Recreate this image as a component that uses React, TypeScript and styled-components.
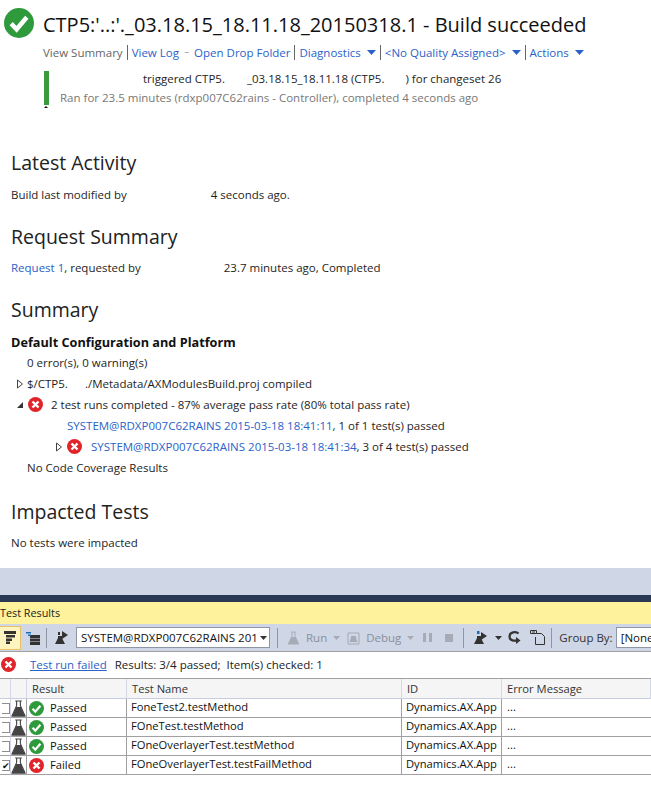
import React from "react";
import styled, { createGlobalStyle } from "styled-components";

const GlobalStyle = createGlobalStyle`
  html, body { margin: 0; padding: 0; background: #fff; }
  body { font-family: "Open Sans", "Noto Sans", sans-serif; color: #1e1e1e; }
`;

const rows = [
  { name: "FoneTest2.testMethod", passed: true, checked: false },
  { name: "FOneTest.testMethod", passed: true, checked: false },
  { name: "FOneOverlayerTest.testMethod", passed: true, checked: false },
  { name: "FOneOverlayerTest.testFailMethod", passed: false, checked: true },
];

const CheckBadge = ({ size }: { size: number }) => (
  <svg width={size} height={size} viewBox="0 0 20 20">
    <circle cx="10" cy="10" r="10" fill="#2f9a3c" />
    <path d="M4.8 10.4l3.6 3.8 6.8-8" fill="none" stroke="#fff" strokeWidth="3" />
  </svg>
);

const ErrorBadge = ({ size }: { size: number }) => (
  <svg width={size} height={size} viewBox="0 0 20 20">
    <circle cx="10" cy="10" r="10" fill="#e0242a" />
    <path d="M6 6l8 8M14 6l-8 8" fill="none" stroke="#fff" strokeWidth="3.2" />
  </svg>
);

const Flask = ({ color = "#444", width = 16, height = 19 }: { color?: string; width?: number; height?: number }) => (
  <svg width={width} height={height} viewBox="0 0 16 19">
    <path d="M4.500 1.500h7M6 1.500v5L1 17.500h14L10 6.500v-5" fill="none" stroke={color} strokeWidth="1.200" />
    <path d="M5.500 8h5L15 18H1z" fill={color} />
  </svg>
);

const Expander = ({ open }: { open?: boolean }) => (
  <svg width="8" height="10" viewBox="0 0 8 10">
    {open ? <path d="M1 8h6V2z" fill="#333" /> : <path d="M1.500 1l5 4-5 4z" fill="#fff" stroke="#444" />}
  </svg>
);

const Caret = ({ color = "#2a62c9", width = 9 }: { color?: string; width?: number }) => (
  <CaretSvg width={width} height={Math.round(width / 2)} viewBox="0 0 9 5">
    <path d="M0 0h9L4.500 5z" fill={color} />
  </CaretSvg>
);

export default function App() {
  return (
    <Page>
      <GlobalStyle />
      <Report>
        <TitleRow>
          <TitleBadge><CheckBadge size={30} /></TitleBadge>
          <Title>CTP5:'..:'._03.18.15_18.11.18_20150318.1 - Build succeeded</Title>
        </TitleRow>
        <Nav>
          <NavText>View Summary</NavText>
          <NavSep />
          <NavLink>View Log</NavLink>
          <Dash>−</Dash>
          <NavLink>Open Drop Folder</NavLink>
          <NavSep />
          <NavLink>Diagnostics</NavLink>
          <Caret />
          <NavSep />
          <NavLink>&lt;No Quality Assigned&gt;</NavLink>
          <Caret />
          <NavSep />
          <NavLink>Actions</NavLink>
          <Caret />
        </Nav>
        <Trigger>
          <StatusBar />
          <TriggerLines>
            <TriggerLine>
              <Redacted $width={83} />
              triggered CTP5.
              <Redacted $width={22} />
              _03.18.15_18.11.18 (CTP5.
              <Redacted $width={21} />) for changeset 26
            </TriggerLine>
            <RanLine>Ran for 23.5 minutes (rdxp007C62rains - Controller), completed 4 seconds ago</RanLine>
          </TriggerLines>
        </Trigger>

        <Section $top={43}>
          <Heading>Latest Activity</Heading>
          <Line>
            Build last modified by <Redacted $width={78} /> 4 seconds ago.
          </Line>
        </Section>
        <Section>
          <Heading>Request Summary</Heading>
          <Line>
            <Link>Request 1</Link>, requested by <Redacted $width={77} /> 23.7 minutes ago, Completed
          </Line>
        </Section>
        <Section>
          <Heading>Summary</Heading>
          <SubHeading>Default Configuration and Platform</SubHeading>
          <Tree>
            <TreeRow $indent={16}>0 error(s), 0 warning(s)</TreeRow>
            <TreeRow $indent={5}>
              <Expander />
              <TreeLabel $gap={3}>$/CTP5.<Redacted $width={17} />./Metadata/AXModulesBuild.proj compiled</TreeLabel>
            </TreeRow>
            <TreeRow $indent={5}>
              <Expander open />
              <BadgeSlot><ErrorBadge size={15} /></BadgeSlot>
              <TreeLabel $gap={8}>2 test runs completed - 87% average pass rate (80% total pass rate)</TreeLabel>
            </TreeRow>
            <TreeRow $indent={56}>
              <Link>SYSTEM@RDXP007C62RAINS 2015-03-18 18:41:11</Link>, 1 of 1 test(s) passed
            </TreeRow>
            <TreeRow $indent={44}>
              <Expander />
              <BadgeSlot><ErrorBadge size={15} /></BadgeSlot>
              <TreeLabel $gap={9}>
                <Link>SYSTEM@RDXP007C62RAINS 2015-03-18 18:41:34</Link>, 3 of 4 test(s) passed
              </TreeLabel>
            </TreeRow>
            <TreeRow $indent={16}>No Code Coverage Results</TreeRow>
          </Tree>
        </Section>
        <Section $top={22}>
          <Heading>Impacted Tests</Heading>
          <Line>No tests were impacted</Line>
        </Section>
      </Report>

      <Band />
      <DarkRule />
      <PanelTitle>Test Results</PanelTitle>
      <Toolbar>
        <ToggleButton>
          <svg width="14" height="13" viewBox="0 0 14 13">
            <path d="M1 0h12v3H1zM3 4h9v2.500H3zM3 7.500h6V10H3zM3 10.500h4V13H3z" fill="#333" />
          </svg>
        </ToggleButton>
        <ToolIcon $left={5}>
          <svg width="14" height="14" viewBox="0 0 14 14">
            <path d="M4 4h10v3H4zM4 7.500h10v3H4zM4 11h10v3H4z" fill="#333" />
            <path d="M0 1h5v1.500H0zM2 3.500h3V5H2z" fill="#1f6cb5" />
          </svg>
        </ToolIcon>
        <ToolSep $left={6} />
        <ToolIcon $left={8}>
          <svg width="13" height="15" viewBox="0 0 13 15">
            <path d="M3 6h4v2l3 6H0l3-6z" fill="#333" />
            <path d="M7 1l6 4-6 4z" fill="#333" />
            <path d="M3 2h2v3H3z" fill="#333" />
          </svg>
        </ToolIcon>
        <RunSelect>
          SYSTEM@RDXP007C62RAINS 201
          <Caret color="#333" width={7} />
        </RunSelect>
        <ToolSep $left={7} />
        <Disabled $left={9}>
          <Flask color="#a6abb5" width={13} height={14} />
          <span>Run</span>
          <Caret color="#a6abb5" width={7} />
        </Disabled>
        <Disabled $left={7}>
          <svg width="13" height="14" viewBox="0 0 13 14">
            <path d="M1 2h11v11H1z" fill="none" stroke="#a6abb5" />
            <path d="M4 5h5v2l1.500 4h-8L4 7z" fill="#a6abb5" />
          </svg>
          <span>Debug</span>
          <Caret color="#a6abb5" width={7} />
        </Disabled>
        <ToolIcon $left={9}>
          <svg width="9" height="9" viewBox="0 0 9 9">
            <path d="M0 0h3v9H0zM6 0h3v9H6z" fill="#a6abb5" />
          </svg>
        </ToolIcon>
        <ToolIcon $left={13}>
          <svg width="8" height="8" viewBox="0 0 8 8">
            <path d="M0 0h8v8H0z" fill="#a6abb5" />
          </svg>
        </ToolIcon>
        <ToolSep $left={10} />
        <ToolIcon $left={10}>
          <svg width="13" height="15" viewBox="0 0 13 15">
            <path d="M3 6h4v2l3 6H0l3-6z" fill="#333" />
            <path d="M7 2l6 4-6 4z" fill="#333" />
            <path d="M3 1h2.500v3H3z" fill="#1f6cb5" />
          </svg>
        </ToolIcon>
        <ToolIcon $left={8}>
          <Caret color="#333" width={7} />
        </ToolIcon>
        <ToolIcon $left={6}>
          <svg width="13" height="13" viewBox="0 0 13 13">
            <path d="M10.500 2.500C8 0 1.500 1 1.500 5.500S6.500 10 10 9.500" fill="none" stroke="#333" strokeWidth="2.200" />
            <path d="M8 6l4.500 3.500L8 13z" fill="#333" />
          </svg>
        </ToolIcon>
        <ToolIcon $left={9}>
          <svg width="15" height="15" viewBox="0 0 15 15">
            <path d="M.5.500h6v3h-6zM6.500 3.500h5l3 3v8h-9V7" fill="none" stroke="#333" />
            <path d="M2 2h3" stroke="#333" />
          </svg>
        </ToolIcon>
        <ToolSep $left={6} />
        <GroupLabel>Group By:</GroupLabel>
        <GroupSelect>[None</GroupSelect>
      </Toolbar>
      <StatusRow>
        <ErrorBadge size={15} />
        <StatusLink>Test run failed</StatusLink>
        <span>Results: 3/4 passed;&nbsp; Item(s) checked: 1</span>
      </StatusRow>
      <Grid>
        <HeaderCell />
        <HeaderCell />
        <HeaderCell>Result</HeaderCell>
        <HeaderCell>Test Name</HeaderCell>
        <HeaderCell>ID</HeaderCell>
        <HeaderCell>Error Message</HeaderCell>
        {rows.map((row) => (
          <React.Fragment key={row.name}>
            <CheckCell><Box>{row.checked && "✔"}</Box></CheckCell>
            <FlaskCell><Flask /></FlaskCell>
            <ResultCell>
              {row.passed ? <CheckBadge size={15} /> : <ErrorBadge size={15} />}
              <span>{row.passed ? "Passed" : "Failed"}</span>
            </ResultCell>
            <Cell>{row.name}</Cell>
            <Cell>Dynamics.AX.App</Cell>
            <LastCell>...</LastCell>
          </React.Fragment>
        ))}
      </Grid>
    </Page>
  );
}

const Page = styled.div`
  width: 651px;
  height: 808px;
  overflow: hidden;
  display: flex;
  flex-direction: column;
  font-size: 11.5px;
`;
const Report = styled.div`
  height: 568px;
  padding: 10px 0 0 11px;
  box-sizing: border-box;
`;
const TitleRow = styled.div`
  display: flex;
  align-items: center;
  gap: 9px;
  height: 30px;
  margin-left: -7px;
`;
const TitleBadge = styled.div`
  display: flex;
  margin-top: -4px;
`;
const Title = styled.h1`
  margin: 0;
  font-size: 20px;
  font-weight: 400;
  line-height: 30px;
  color: #111;
  white-space: nowrap;
`;
const Nav = styled.div`
  display: flex;
  align-items: center;
  gap: 3px;
  height: 18px;
  margin: 3px 0 0 32px;
  white-space: nowrap;
`;
const NavText = styled.span`
  color: #666;
`;
const NavLink = styled.span`
  color: #2a62c9;
`;
const NavSep = styled.span`
  width: 1px;
  height: 15px;
  background: #666;
  margin: 0 1px;
`;
const CaretSvg = styled.svg`
  flex: none;
  ${NavLink} + & {
    margin-left: 3px;
  }
`;
const Dash = styled.span`
  color: #888;
  font-size: 9px;
  margin: 0 2px;
`;
const Trigger = styled.div`
  display: flex;
  gap: 11px;
  margin: 10px 0 0 33px;
`;
const StatusBar = styled.div`
  position: relative;
  width: 5px;
  height: 34px;
  background: #3a9a3d;
  &::after {
    content: "";
    position: absolute;
    left: 0;
    bottom: -3px;
    border-left: 2.5px solid transparent;
    border-right: 2.5px solid transparent;
    border-bottom: 2px solid #111;
  }
`;
const TriggerLines = styled.div`
  display: flex;
  flex-direction: column;
  gap: 3px;
`;
const TriggerLine = styled.div`
  line-height: 16px;
  white-space: nowrap;
`;
const RanLine = styled.div`
  line-height: 16px;
  color: #777;
  white-space: nowrap;
`;
const Redacted = styled.span<{ $width: number }>`
  display: inline-block;
  width: ${({ $width }) => $width}px;
`;
const Section = styled.section<{ $top?: number }>`
  margin-top: ${({ $top }) => $top ?? 20}px;
`;
const Heading = styled.h2`
  margin: 0 0 9.5px;
  font-size: 19.5px;
  font-weight: 400;
  line-height: 28px;
  color: #222;
`;
const Line = styled.div`
  line-height: 16px;
  white-space: nowrap;
`;
const Link = styled.span`
  color: #2a62c9;
`;
const SubHeading = styled.div`
  font-weight: 700;
  font-size: 12.7px;
  line-height: 16px;
  color: #111;
  margin-top: 2px;
`;
const Tree = styled.div`
  display: flex;
  flex-direction: column;
  gap: 5px;
  margin-top: 5px;
`;
const TreeRow = styled.div<{ $indent: number }>`
  display: flex;
  align-items: center;
  height: 16px;
  padding-left: ${({ $indent }) => $indent}px;
  white-space: pre;
`;
const TreeLabel = styled.span<{ $gap: number }>`
  margin-left: ${({ $gap }) => $gap}px;
`;
const BadgeSlot = styled.span`
  display: flex;
  margin-left: 4px;
`;
const Band = styled.div`
  height: 27px;
  flex: none;
  background: #cfd6e5;
`;
const DarkRule = styled.div`
  height: 7px;
  flex: none;
  background: #293955;
`;
const PanelTitle = styled.div`
  height: 22px;
  flex: none;
  background: #fff29d;
  font-size: 10.8px;
  line-height: 22px;
  color: #222;
  white-space: nowrap;
`;
const Toolbar = styled.div`
  height: 28px;
  flex: none;
  box-sizing: border-box;
  display: flex;
  align-items: center;
  background: #cfd6e5;
  border-bottom: 1px solid #a0a0a0;
  white-space: nowrap;
`;
const ToggleButton = styled.div`
  width: 21px;
  height: 24px;
  flex: none;
  display: flex;
  align-items: center;
  justify-content: center;
  box-sizing: border-box;
  background: #fdf4bf;
  border: 1px solid #e5c365;
  border-left: none;
`;
const ToolIcon = styled.div<{ $left: number }>`
  display: flex;
  align-items: center;
  justify-content: center;
  flex: none;
  margin-left: ${({ $left }) => $left}px;
`;
const ToolSep = styled.div<{ $left: number }>`
  width: 1px;
  height: 20px;
  flex: none;
  background: #8e96a5;
  margin-left: ${({ $left }) => $left}px;
`;
const RunSelect = styled.div`
  width: 194px;
  height: 21px;
  flex: none;
  box-sizing: border-box;
  display: flex;
  align-items: center;
  justify-content: space-between;
  padding: 0 2px 0 4px;
  margin-left: 8px;
  background: #fff;
  border: 1px solid #8e96a5;
  color: #111;
  overflow: hidden;
`;
const Disabled = styled.div<{ $left: number }>`
  display: flex;
  align-items: center;
  flex: none;
  gap: 6px;
  color: #8a8f9a;
  margin-left: ${({ $left }) => $left}px;
`;
const GroupLabel = styled.span`
  color: #333;
  flex: none;
  margin-left: 7px;
`;
const GroupSelect = styled.div`
  flex: 1;
  height: 21px;
  margin-left: 3px;
  box-sizing: border-box;
  padding: 0 0 0 4px;
  line-height: 19px;
  background: #fff;
  border: 1px solid #8e96a5;
  border-right: none;
  color: #111;
  overflow: hidden;
`;
const StatusRow = styled.div`
  height: 26px;
  flex: none;
  box-sizing: border-box;
  display: flex;
  align-items: center;
  gap: 7px;
  padding: 0 0 2px 1px;
  color: #222;
  white-space: nowrap;
`;
const StatusLink = styled.span`
  color: #2a62c9;
  text-decoration: underline;
  margin: 0 1px 0 7px;
`;
const Grid = styled.div`
  display: grid;
  grid-template-columns: 11px 16px 100px 275px 100px 1fr;
  grid-template-rows: 20px repeat(4, 19px);
  border-top: 1px solid #a0a0a0;
  box-sizing: border-box;
  white-space: nowrap;
  font-size: 11.2px;
`;
const HeaderCell = styled.div`
  box-sizing: border-box;
  background: #f5f5f5;
  border-right: 1px solid #d5d8e6;
  border-bottom: 1px solid #c9cde0;
  padding-left: 5px;
  line-height: 20px;
  color: #333;
`;
const Cell = styled.div`
  box-sizing: border-box;
  border-right: 1px solid #a0a0a0;
  border-bottom: 1px solid #a0a0a0;
  padding-left: 4px;
  line-height: 16px;
  color: #111;
  overflow: hidden;
`;
const LastCell = styled(Cell)`
  border-right: none;
  padding-left: 5px;
`;
const CheckCell = styled(Cell)`
  padding: 0;
  border-right-color: #d5d8e6;
  display: flex;
  align-items: center;
  justify-content: flex-end;
`;
const Box = styled.div`
  width: 8px;
  height: 11px;
  box-sizing: border-box;
  border: 1px solid #8e8e8e;
  border-left: none;
  background: #fff;
  font-size: 9px;
  line-height: 9px;
  color: #111;
`;
const FlaskCell = styled(Cell)`
  padding: 0;
  display: flex;
  align-items: center;
  justify-content: center;
  overflow: hidden;
`;
const ResultCell = styled(Cell)`
  padding-left: 2px;
  display: flex;
  align-items: center;
  gap: 6px;
`;
